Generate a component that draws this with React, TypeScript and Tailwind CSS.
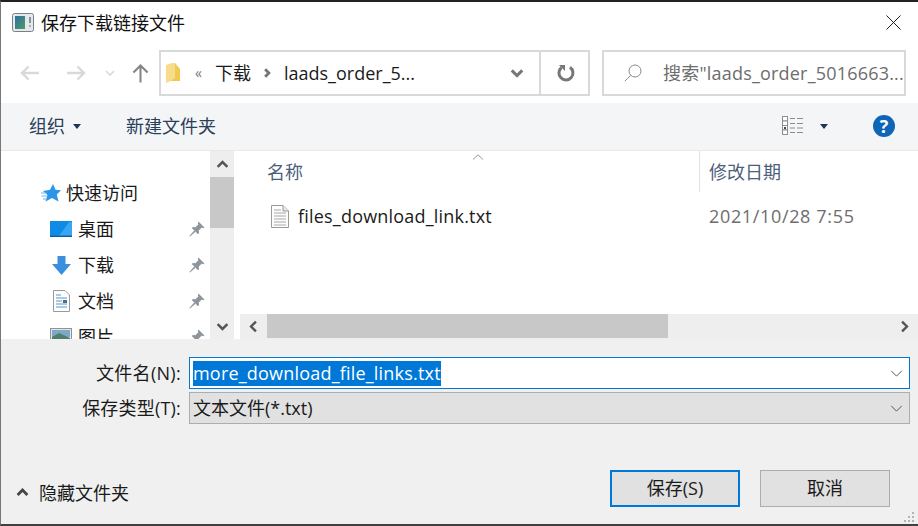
import type { ReactNode } from 'react'

// Save-as dialog, Windows 10 style

function Chevron({ dir, className, weight = 3 }: { dir: 'up' | 'down' | 'left' | 'right'; className?: string; weight?: number }) {
  const d = {
    up: 'M2 11 L8 5 L14 11',
    down: 'M2 5 L8 11 L14 5',
    left: 'M11 2 L5 8 L11 14',
    right: 'M5 2 L11 8 L5 14',
  }[dir]
  return (
    <svg viewBox="0 0 16 16" className={className} fill="none" stroke="currentColor" strokeWidth={weight}>
      <path d={d} />
    </svg>
  )
}

function Pin() {
  return (
    <svg viewBox="0 0 16 16" className="size-[16px] text-[#8d949c]" fill="currentColor">
      <path d="M9.5 0.5 L15.5 6.5 L14 7.2 L12.8 6.6 L9.8 9.6 L10 12.4 L8.8 13 L3 7.2 L3.6 6 L6.4 6.2 L9.4 3.2 L8.8 2 Z" />
      <path d="M5.2 9.6 L6.4 10.8 L1 15.6 L0.4 15 Z" />
    </svg>
  )
}

function Caret() {
  return (
    <svg viewBox="0 0 8 5" className="h-[5px] w-[8px] text-[#1f3552]" fill="currentColor">
      <path d="M0 0 H8 L4 5 Z" />
    </svg>
  )
}

function AppIcon() {
  return (
    <svg viewBox="0 0 22 19" className="h-[19px] w-[22px] shrink-0">
      <defs>
        <linearGradient id="appg" x1="0" y1="0" x2="1" y2="1">
          <stop offset="0" stopColor="#2f6f9e" />
          <stop offset="1" stopColor="#4f9a6c" />
        </linearGradient>
      </defs>
      <rect x="0.5" y="0.5" width="21" height="18" rx="2" fill="#e6e9ec" stroke="#7b8086" />
      <rect x="3" y="3" width="10" height="13" fill="url(#appg)" />
      <rect x="17" y="4" width="2" height="6" fill="#8a9096" />
      <rect x="17" y="12" width="2" height="2" fill="#a8adb2" />
    </svg>
  )
}

function StarIcon() {
  return (
    <svg viewBox="0 0 20 18" className="h-[18px] w-[20px] shrink-0">
      <path d="M12 0 L14.5 5.8 L20 6.2 L15.8 10.4 L17.5 17.5 L11 14 L4.5 17.5 L6.5 11 L2 7 L9 5.8 Z" fill="#2c95e8" />
      <path d="M0 9 H6 M0.5 12 H6 M2 15 H6" stroke="#6db6f0" strokeWidth="1" />
    </svg>
  )
}

function DesktopIcon() {
  return (
    <svg viewBox="0 0 22 16" className="h-[16px] w-[22px]">
      <rect width="22" height="16" fill="#0f8be6" />
      <path d="M9 15 L19 1 H22 V15 Z" fill="#3aa6f2" />
      <rect y="14.6" width="22" height="1.4" fill="#0a5ea8" />
    </svg>
  )
}

function DownloadIcon() {
  return (
    <svg viewBox="0 0 19 19" className="h-[19px] w-[19px]">
      <path d="M5.5 0 H13.5 V8 H19 L9.5 19 L0 8 H5.5 Z" fill="#3b8fe0" />
    </svg>
  )
}

function DocIcon() {
  return (
    <svg viewBox="0 0 17 22" className="h-[22px] w-[17px]">
      <path d="M0.5 0.5 H12 L16.5 5 V21.5 H0.5 Z" fill="#fdfdfd" stroke="#9a9a9a" />
      <path d="M3 5 H8 M3 8 H14 M3 14 H14 M3 17 H14" stroke="#4f9bd8" strokeWidth="1" />
      <path d="M3 11 H9" stroke="#8a8a8a" strokeWidth="1" />
      <rect x="10" y="10" width="4" height="3" fill="#4a6f86" />
    </svg>
  )
}

function PictureIcon() {
  return (
    <svg viewBox="0 0 22 18" className="h-[18px] w-[22px]">
      <rect x="0.5" y="0.5" width="21" height="17" fill="#dfe6ea" stroke="#8d9499" />
      <rect x="2" y="2" width="18" height="7" fill="#7fa8c6" />
      <path d="M2 9 L9 5 L20 10 V16 H2 Z" fill="#4f7f6a" />
    </svg>
  )
}

function TextFileIcon() {
  return (
    <svg viewBox="0 0 18 23" className="h-[23px] w-[18px] shrink-0">
      <path d="M0.5 0.5 H12 L17.5 6 V22.5 H0.5 Z" fill="#fdfdfd" stroke="#9a9a9a" />
      <path d="M12 0.5 V6 H17.5" fill="#e8e8e8" stroke="#9a9a9a" />
      <path d="M3 5 H10 M3 8 H15 M3 11 H15 M3 14 H15 M3 17 H15 M3 20 H15" stroke="#a8a8a8" strokeWidth="1" />
    </svg>
  )
}

function NavItem({ icon, label }: { icon: ReactNode; label: string }) {
  return (
    <div className="flex h-[36px] items-center">
      <div className="flex w-[77px] shrink-0 justify-center pl-[46px] pr-[3px]">{icon}</div>
      <span className="text-[#1a1a1a]">{label}</span>
      <div className="ml-auto pr-[5px]">
        <Pin />
      </div>
    </div>
  )
}

function FieldChevron() {
  return (
    <svg viewBox="0 0 14 8" className="h-[7px] w-[13px] text-[#444]" fill="none" stroke="currentColor" strokeWidth="1">
      <path d="M1 1 L7 7 L13 1" />
    </svg>
  )
}

export default function App() {
  return (
    <div className="flex h-[526px] w-[918px] flex-col overflow-hidden border-t-2 border-b-2 border-l border-t-[#222222] border-b-[#404040] border-l-[#777777] bg-white font-['Open_Sans','Noto_Sans_CJK_SC',sans-serif] text-[18px] leading-none">
      {/* title bar */}
      <div className="flex h-[41px] shrink-0 items-center pl-[11px] pr-[17px]">
        <AppIcon />
        <span className="ml-[7px] text-[#111]">保存下载链接文件</span>
        <svg viewBox="0 0 16 16" className="ml-auto size-[15px] text-[#111]" fill="none" stroke="currentColor" strokeWidth="1">
          <path d="M0.5 0.5 L15.5 15.5 M15.5 0.5 L0.5 15.5" />
        </svg>
      </div>

      {/* address row */}
      <div className="flex h-[60px] shrink-0 items-start pt-[7px]">
        <div className="flex h-[46px] w-[158px] shrink-0 items-center">
          <svg viewBox="0 0 20 16" className="ml-[19px] h-[16px] w-[20px] text-[#d9d9d9]" fill="none" stroke="currentColor" strokeWidth="2.4">
            <path d="M19 8 H2 M8.5 1.5 L2 8 L8.5 14.5" />
          </svg>
          <svg viewBox="0 0 20 16" className="ml-[26px] h-[16px] w-[20px] text-[#d9d9d9]" fill="none" stroke="currentColor" strokeWidth="2.4">
            <path d="M1 8 H18 M11.5 1.5 L18 8 L11.5 14.5" />
          </svg>
          <svg viewBox="0 0 10 6" className="ml-[19px] h-[6px] w-[10px] text-[#d9d9d9]" fill="none" stroke="currentColor" strokeWidth="1.6">
            <path d="M1 1 L5 5 L9 1" />
          </svg>
          <svg viewBox="0 0 18 20" className="ml-[17px] h-[20px] w-[17px] text-[#858585]" fill="none" stroke="currentColor" strokeWidth="2.2">
            <path d="M9 20 V2 M1.5 9.5 L9 2 L16.5 9.5" />
          </svg>
        </div>
        <div className="flex h-[46px] w-[431px] shrink-0 items-center border-2 border-[#d9d9d9]">
          <svg viewBox="0 0 14 20" className="ml-[5px] h-[20px] w-[14px] shrink-0">
            <path d="M0 2 L6 0 H9 V16 L0 20 Z" fill="#f7dd8b" />
            <path d="M9 0 L14 6 V18 H4 L9 15 Z" fill="#f2c94f" />
          </svg>
          <span className="ml-[15px] text-[14px] text-[#777]">«</span>
          <span className="ml-[13px] text-[#1a1a1a]">下载</span>
          <Chevron dir="right" weight={4.5} className="ml-[11px] size-[10px] text-[#777]" />
          <span className="ml-[12px] text-[#1a1a1a]">laads_order_5...</span>
          <Chevron dir="down" weight={3.4} className="ml-auto mr-[15px] size-[14px] text-[#777]" />
          <div className="flex h-full w-[49px] items-center justify-center border-l-2 border-[#d9d9d9] pl-[2px]">
            <svg viewBox="0 0 18 18" className="size-[18px] text-[#777]" fill="none" stroke="currentColor" strokeWidth="3">
              <path d="M4.5 3.5 A7 7 0 1 0 13 3.2" />
              <path d="M2 1 H8 V7 Z" fill="currentColor" stroke="none" />
            </svg>
          </div>
        </div>
        <div className="ml-[12px] flex h-[46px] w-[304px] shrink-0 items-center overflow-hidden border-2 border-[#d9d9d9]">
          <svg viewBox="0 0 18 18" className="ml-[20px] size-[18px] shrink-0 text-[#8a8a8a]" fill="none" stroke="currentColor" strokeWidth="1">
            <circle cx="11" cy="7" r="6" />
            <path d="M6.6 11.4 L0.8 17.2" />
          </svg>
          <span className="ml-[21px] whitespace-nowrap tracking-[0.2px] text-[#6d6d6d]">搜索"laads_order_5016663...</span>
        </div>
      </div>

      {/* toolbar */}
      <div className="flex h-[47px] shrink-0 items-center bg-[#f4f5f7] pb-[1px] pl-[28px] pr-[23px] text-[#2b3f58]">
        <span>组织</span>
        <div className="ml-[8px]">
          <Caret />
        </div>
        <span className="ml-[45px]">新建文件夹</span>
        <svg viewBox="0 0 22 20" className="ml-auto h-[20px] w-[22px]">
          <rect x="0.5" y="0.5" width="5" height="4.5" fill="#fff" stroke="#8d8d8d" />
          <rect x="0.5" y="5" width="5" height="4.5" fill="#fff" stroke="#8d8d8d" />
          <rect x="0.5" y="9.5" width="5" height="4.5" fill="#fff" stroke="#8d8d8d" />
          <rect x="0.5" y="14" width="5" height="4.5" fill="#fff" stroke="#8d8d8d" />
          <rect x="2" y="11" width="2" height="2" fill="#444" />
          <path d="M8 2.5 H13 M15 2.5 H21 M8 7.5 H13 M15 7.5 H21 M8 12 H13 M15 12 H21 M8 16.5 H13 M15 16.5 H21" stroke="#8d8d8d" strokeWidth="1" />
        </svg>
        <div className="ml-[16px]">
          <Caret />
        </div>
        <div className="ml-[45px] flex size-[22px] items-center justify-center rounded-full bg-[#0f66b8] text-[18px] font-bold text-white">?</div>
      </div>

      {/* browser */}
      <div className="flex h-[189px] shrink-0 border-t border-[#e8e8e8]">
        <div className="flex w-[209px] shrink-0 flex-col overflow-hidden pt-[24px]">
          <div className="flex h-[36px] shrink-0 items-center pl-[40px]">
            <StarIcon />
            <span className="ml-[5px] text-[#1a1a1a]">快速访问</span>
          </div>
          <div className="shrink-0">
            <NavItem icon={<DesktopIcon />} label="桌面" />
            <NavItem icon={<DownloadIcon />} label="下载" />
            <NavItem icon={<DocIcon />} label="文档" />
            <NavItem icon={<PictureIcon />} label="图片" />
          </div>
        </div>
        <div className="flex w-[24px] shrink-0 flex-col items-center bg-[#eeeeee] text-[#555]">
          <div className="flex h-[26px] w-full items-center justify-center">
            <Chevron dir="up" className="size-[13px]" />
          </div>
          <div className="h-[51px] w-full bg-[#c8c8c8]" />
          <div className="mt-auto flex h-[26px] w-full items-center justify-center">
            <Chevron dir="down" className="size-[13px]" />
          </div>
        </div>
        <div className="ml-[6px] flex min-w-0 flex-1 flex-col">
          <div className="grid h-[163px] shrink-0 grid-cols-[459px_1fr] grid-rows-[41px_1fr]">
            <div className="relative flex items-center pl-[27px] text-[#4c607a]">
              名称
              <svg viewBox="0 0 12 6" className="absolute left-[232px] top-[3px] h-[6px] w-[12px] text-[#999]" fill="none" stroke="currentColor" strokeWidth="1">
                <path d="M1 5.5 L6 0.8 L11 5.5" />
              </svg>
            </div>
            <div className="flex items-center border-l border-[#e2e2e2] pl-[9px] text-[#4c607a]">修改日期</div>
            <div className="flex h-[48px] items-center pl-[31px]">
              <TextFileIcon />
              <span className="ml-[9px] tracking-[0.2px] text-[#1a1a1a]">files_download_link.txt</span>
            </div>
            <div className="flex h-[48px] items-center pl-[10px] tracking-[0.65px] text-[#6d6d6d]">2021/10/28 7:55</div>
          </div>
          <div className="flex flex-1 items-start bg-[#eeeeee] text-[#555]">
            <div className="flex h-[24px] w-[27px] items-center justify-center">
              <Chevron dir="left" className="size-[13px]" />
            </div>
            <div className="h-[24px] w-[401px] bg-[#c8c8c8]" />
            <div className="ml-auto flex h-[24px] w-[28px] items-center justify-center">
              <Chevron dir="right" className="size-[13px]" />
            </div>
          </div>
        </div>
      </div>

      {/* form */}
      <div className="relative flex min-h-0 flex-1 flex-col bg-[#f0f0f0] pr-[8px] pt-[18px]">
        <div className="flex h-[32px] items-center">
          <label className="w-[180px] pb-[1px] text-right tracking-[0.3px] text-[#1a1a1a]">文件名(N):</label>
          <div className="ml-[8px] flex h-full flex-1 items-center border border-[#0078d7] bg-white pl-[3px] pr-[6px]">
            <span className="flex h-[25px] items-center bg-[#0078d7] pb-[1px] tracking-[0.2px] text-white">more_download_file_links.txt</span>
            <div className="ml-auto">
              <FieldChevron />
            </div>
          </div>
        </div>
        <div className="mt-[3px] flex h-[32px] items-center">
          <label className="w-[180px] text-right tracking-[0.2px] text-[#1a1a1a]">保存类型(T):</label>
          <div className="ml-[8px] flex h-full flex-1 items-center border border-[#adadad] bg-[#e1e1e1] pl-[3px] pr-[6px] text-[#1a1a1a]">
            <span>文本文件(*.txt)</span>
            <div className="ml-auto">
              <FieldChevron />
            </div>
          </div>
        </div>
        <div className="mt-[46px] flex h-[37px] items-center">
          <div className="mt-[8px] flex items-center">
            <Chevron dir="up" weight={3.4} className="ml-[15px] size-[13px] text-[#444]" />
            <span className="ml-[10px] text-[#1a1a1a]">隐藏文件夹</span>
          </div>
          <button type="button" className="ml-auto flex h-[37px] w-[130px] items-center justify-center border-2 border-[#0078d7] bg-[#e1e1e1] pb-[1px] text-[#1a1a1a]">
            保存(S)
          </button>
          <button type="button" className="ml-[20px] mr-[20px] flex h-[37px] w-[130px] items-center justify-center border border-[#adadad] bg-[#e1e1e1] pb-[1px] text-[#1a1a1a]">
            取消
          </button>
        </div>
        {/* resize grip */}
        <svg viewBox="0 0 12 12" className="absolute bottom-0 right-[2px] size-[12px] text-[#b4b4b4]" fill="currentColor">
          <rect x="8" y="0" width="2" height="2" />
          <rect x="4" y="4" width="2" height="2" />
          <rect x="8" y="4" width="2" height="2" />
          <rect x="0" y="8" width="2" height="2" />
          <rect x="4" y="8" width="2" height="2" />
          <rect x="8" y="8" width="2" height="2" />
        </svg>
      </div>
    </div>
  )
}
